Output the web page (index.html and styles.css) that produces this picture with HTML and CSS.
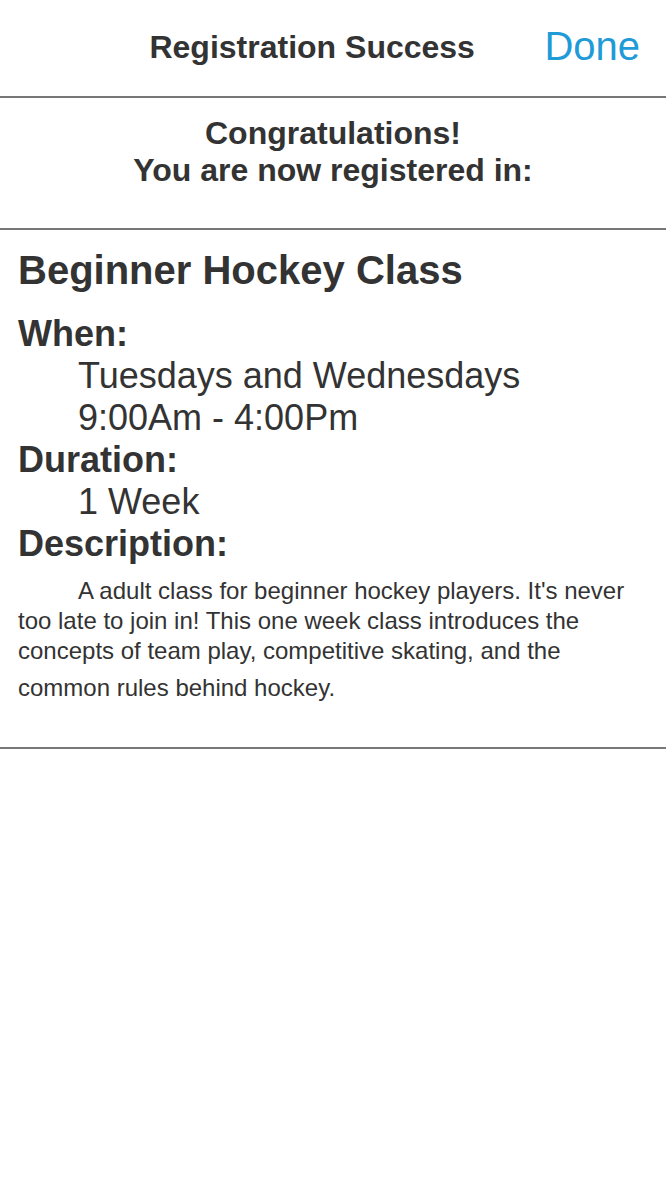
FILE: index.html
```html
<!DOCTYPE html>
<html>
<head>
<meta charset="utf-8">
<link rel="stylesheet" href="styles.css">
</head>
<body>
<header class="bar">
  <h1 class="bar-title">Registration Success</h1>
  <a class="bar-done">Done</a>
</header>
<section class="congrats">
  <p>Congratulations!<br>You are now registered in:</p>
</section>
<section class="details">
  <h2 class="class-name">Beginner Hockey Class</h2>
  <h3 class="label label-first">When:</h3>
  <p class="value">Tuesdays and Wednesdays<br>9:00Am - 4:00Pm</p>
  <h3 class="label">Duration:</h3>
  <p class="value">1 Week</p>
  <h3 class="label">Description:</h3>
  <p class="desc">A adult class for beginner hockey players. It's never too late to join in! This one week class introduces the concepts of team play, competitive skating, and the <span class="last">common rules behind hockey.</span></p>
</section>
</body>
</html>
```

FILE: styles.css
```css
* { box-sizing: border-box; }
html, body { margin: 0; padding: 0; background: #fff; }
body {
  font-family: "Liberation Sans", Arial, sans-serif;
  color: #333;
  width: 666px;
}
.bar {
  display: flex;
  align-items: center;
  height: 98px;
  padding-left: 80px;
  padding-right: 26px;
  padding-bottom: 2px;
  border-bottom: 2px solid #777;
}
.bar-title {
  flex: 1;
  margin: 0;
  text-align: center;
  font-size: 32px;
  font-weight: bold;
}
.bar-done {
  color: #1f9bd7;
  font-size: 40px;
  margin-top: -2px;
}
.congrats {
  height: 132px;
  border-bottom: 2px solid #777;
  display: flex;
  justify-content: center;
  padding-top: 17px;
}
.congrats p {
  margin: 0;
  text-align: center;
  font-size: 32px;
  font-weight: bold;
  line-height: 37px;
}
.details {
  padding: 18px 18px 0 18px;
  height: 519px;
  border-bottom: 2px solid #777;
}
.class-name {
  margin: 0;
  font-size: 40px;
  font-weight: bold;
  line-height: 44px;
}
.label {
  margin: 0;
  font-size: 36px;
  font-weight: bold;
  line-height: 42px;
}
.label-first {
  margin-top: 21px;
}
.value {
  margin: 0;
  padding-left: 60px;
  font-size: 36px;
  line-height: 42px;
}
.desc {
  margin: 11px 0 0 0;
  font-size: 24px;
  line-height: 30px;
  text-indent: 60px;
}
.desc .last {
  display: inline-block;
  margin-top: 7px;
  text-indent: 0;
}
```
